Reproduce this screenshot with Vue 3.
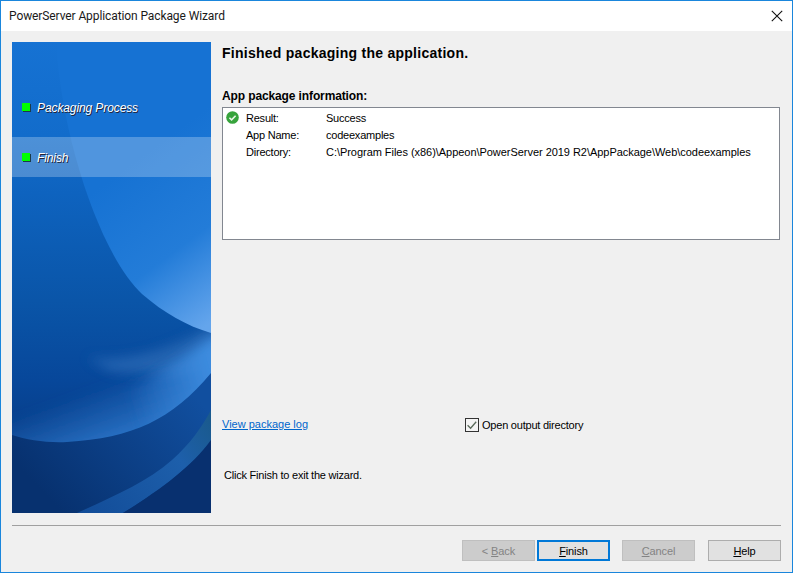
<script setup>
const info = [
  { label: 'Result:', value: 'Success', ok: true },
  { label: 'App Name:', value: 'codeexamples' },
  { label: 'Directory:', value: 'C:\\Program Files (x86)\\Appeon\\PowerServer 2019 R2\\AppPackage\\Web\\codeexamples', path: true },
]
</script>

<template>
  <div class="win">
    <header class="title">
      <span>PowerServer Application Package Wizard</span>
      <svg class="close" width="12" height="12" viewBox="0 0 12 12"><path d="M.8.8l10.4 10.4M11.2.8L.8 11.2" stroke="#111" stroke-width="1.1" fill="none"/></svg>
    </header>
    <div class="body">
      <div class="main">
        <aside class="side">
          <svg class="art" width="199" height="471" viewBox="0 0 199 471">
            <defs>
              <linearGradient id="base" x1="0" y1="0" x2="0" y2="1">
                <stop offset="0" stop-color="#1672d3"/>
                <stop offset=".2" stop-color="#126ccb"/>
                <stop offset=".32" stop-color="#0e63bf"/>
                <stop offset=".55" stop-color="#0a55a8"/>
                <stop offset=".72" stop-color="#07479a"/>
                <stop offset="1" stop-color="#08306f"/>
              </linearGradient>
              <linearGradient id="orb" gradientUnits="userSpaceOnUse" x1="95" y1="140" x2="199" y2="280">
                <stop offset="0" stop-color="#1672d3"/>
                <stop offset=".55" stop-color="#237cd8"/>
                <stop offset="1" stop-color="#64a5ec"/>
              </linearGradient>
              <linearGradient id="glow" gradientUnits="userSpaceOnUse" x1="85" y1="345" x2="105" y2="400">
                <stop offset="0" stop-color="#2a74c8" stop-opacity="0"/>
                <stop offset="1" stop-color="#2a74c8"/>
              </linearGradient>
              <linearGradient id="glowR" gradientUnits="userSpaceOnUse" x1="115" y1="350" x2="199" y2="325">
                <stop offset="0" stop-color="#3d8cdf" stop-opacity="0"/>
                <stop offset="1" stop-color="#3d8cdf"/>
              </linearGradient>
              <linearGradient id="low" gradientUnits="userSpaceOnUse" x1="40" y1="460" x2="170" y2="340">
                <stop offset="0" stop-color="#07316f"/>
                <stop offset="1" stop-color="#114f9f"/>
              </linearGradient>
              <linearGradient id="arc" gradientUnits="userSpaceOnUse" x1="70" y1="470" x2="199" y2="380">
                <stop offset="0" stop-color="#124c98"/>
                <stop offset=".7" stop-color="#1d5fab"/>
                <stop offset="1" stop-color="#1a5a8e"/>
              </linearGradient>
              <filter id="b8" x="-30%" y="-30%" width="160%" height="160%"><feGaussianBlur stdDeviation="6"/></filter>
            </defs>
            <rect width="199" height="471" fill="url(#base)"/>
            <path d="M75 316C110 320 160 308 195 285L215 295V335L100 330Z" fill="#2f6db8" opacity=".7" filter="url(#b8)"/>
            <path d="M-20 420H240V290C170 325 120 340 60 345H-20Z" fill="url(#glow)" filter="url(#b8)"/>
            <path d="M-20 420H240V270C190 300 150 330 110 350H-20Z" fill="url(#glowR)" filter="url(#b8)"/>
            <path d="M44 0C50 100 90 215 130 252C152 271 175 284 199 291V0Z" fill="url(#orb)"/>
            <path d="M0 393C15 398 35 401 55 400C120 396 160 378 199 331V471H0Z" fill="url(#low)"/>
            <path d="M65 471C100 455 135 440 160 418C178 402 190 385 199 368V398C180 425 145 450 111 471Z" fill="url(#arc)"/>
            <path d="M111 471C145 450 180 425 199 398V471Z" fill="#08306f"/>
          </svg>
          <div class="step one"><i class="dot"></i><span>Packaging Process</span></div>
          <div class="step two"><i class="dot"></i><span>Finish</span></div>
        </aside>
        <section class="content">
          <h1>Finished packaging the application.</h1>
          <h2>App package information:</h2>
          <div class="box">
            <template v-for="r in info" :key="r.label">
              <span class="ico">
                <svg v-if="r.ok" width="13" height="13" viewBox="0 0 13 13"><circle cx="6.5" cy="6.5" r="6.3" fill="#37a33c"/><path d="M3.4 6.7l2.2 2.2 4-4.2" stroke="#e8f5e8" stroke-width="1.6" fill="none"/></svg>
              </span>
              <span>{{ r.label }}</span>
              <span :class="{ path: r.path }">{{ r.value }}</span>
            </template>
          </div>
          <div class="opts">
            <a class="log">View package log</a>
            <label class="chk">
              <svg width="14" height="14" viewBox="0 0 14 14"><rect x=".5" y=".5" width="13" height="13" fill="#f4f4f4" stroke="#333"/><path d="M2.6 7.2l3 3 5.6-6.4" stroke="#5a6a5a" stroke-width="1.3" fill="none"/></svg>
              <span>Open output directory</span>
            </label>
          </div>
          <p class="hint">Click Finish to exit the wizard.</p>
        </section>
      </div>
      <div class="sep"></div>
      <footer class="foot">
        <button class="off back">&lt; <u>B</u>ack</button>
        <button class="def"><u>F</u>inish</button>
        <button class="off cancel"><u>C</u>ancel</button>
        <button class="help"><u>H</u>elp</button>
      </footer>
    </div>
  </div>
</template>

<style>
html, body { margin: 0; overflow: hidden; }
</style>

<style scoped>
.win { box-sizing: border-box; width: 793px; height: 573px; border: 1px solid #1a86dc; background: #f0f0f0; display: flex; flex-direction: column; font: 11px "Liberation Sans", Arial, sans-serif; letter-spacing: -.22px; color: #000; }
.title { height: 30px; flex: none; background: #fff; display: flex; align-items: center; justify-content: space-between; padding: 0 9px 0 8px; font: 12px Roboto, sans-serif; letter-spacing: -.1px; color: #1a1a1a; }
.close { display: block; }
.body { flex: 1; display: flex; flex-direction: column; padding: 11px 11px 0; }
.main { display: flex; height: 471px; flex: none; }
.side { width: 199px; height: 471px; position: relative; flex: none; }
.art { display: block; }
.step { position: absolute; left: 0; width: 199px; height: 40px; display: flex; align-items: center; padding-left: 10px; box-sizing: border-box; gap: 7px; color: #fff; font-size: 12px; letter-spacing: -.1px; font-style: italic; text-shadow: 1px 1px 0 #223; }
.step span { padding-top: 2px; }
.one { top: 45px; }
.two { top: 95px; background: rgba(255,255,255,.25); }
.dot { width: 8px; height: 8px; background: #0f0; box-shadow: 1px 1px 0 #1b3a4a; flex: none; }
.content { flex: 1; display: flex; flex-direction: column; padding-left: 11px; min-width: 0; }
h1 { margin: 3px 0 0; font-size: 14px; line-height: 16px; font-weight: bold; letter-spacing: .26px; }
h2 { margin: 28px 0 0; font-size: 12px; line-height: 15px; font-weight: bold; letter-spacing: -.12px; }
.box { box-sizing: border-box; height: 133px; width: 558px; margin-top: 3px; border: 1px solid #828790; background: #fff; padding: 1px 3px; display: grid; grid-template-columns: 20px 80px 1fr; grid-auto-rows: 17px; align-items: center; white-space: nowrap; }
.path { letter-spacing: -.04px; }
.ico { display: flex; }
.ico svg { display: block; }
.opts { display: flex; align-items: center; margin-top: 176px; height: 17px; }
.log { width: 243px; padding-bottom: 2px; letter-spacing: 0; color: #0066cc; text-decoration: underline; }
.chk { display: flex; align-items: center; gap: 3px; }
.chk svg { display: block; }
.hint { margin: 35px 0 0 2px; line-height: 15px; }
.sep { height: 1px; margin-top: 12px; background: #a0a0a0; flex: none; }
.foot { display: flex; margin-top: 14px; padding-left: 450px; }
button { box-sizing: border-box; width: 73px; height: 21px; padding: 0; border: 1px solid #adadad; background: #e1e1e1; font: 11px "Liberation Sans", Arial, sans-serif; letter-spacing: -.1px; color: #000; border-radius: 0; }
.off { background: #ccc; border-color: #bfbfbf; color: #838383; }
.def { border: 2px solid #0078d7; margin-left: 2px; }
.cancel { margin-left: 12px; }
.help { margin-left: 13px; }
</style>
